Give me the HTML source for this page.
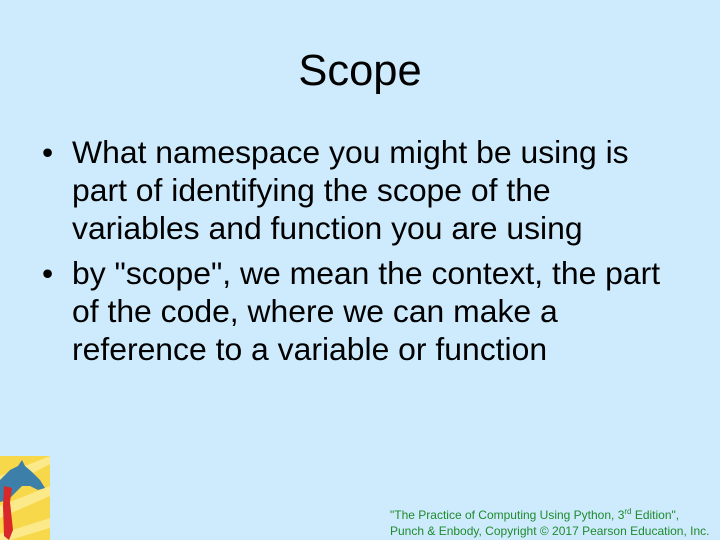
<!DOCTYPE html>
<html><head><style>
body{margin:0;width:720px;height:540px;background:#cdebfd;font-family:"Liberation Sans",sans-serif;position:relative;overflow:hidden}
h1{position:absolute;top:47px;left:0;width:720px;text-align:center;margin:0;font-weight:normal;font-size:43.5px;color:#000}
ul{position:absolute;top:133px;left:42px;margin:0;padding:0;list-style:none;width:675px}
li{position:relative;padding-left:30px;font-size:31.9px;line-height:38px;margin-bottom:7px;color:#000;white-space:nowrap}
li:before{content:"•";position:absolute;left:0;top:0}
.f{position:absolute;left:390px;top:507px;font-size:12px;line-height:16px;color:#1f8a2e}
sup{font-size:8px;vertical-align:5px;line-height:0}
</style></head><body>
<h1>Scope</h1>
<ul>
<li>What namespace you might be using is<br>part of identifying the scope of the<br>variables and function you are using</li>
<li>by "scope", we mean the context, the part<br>of the code, where we can make a<br>reference to a variable or function</li>
</ul>
<svg style="position:absolute;left:0;top:456px" width="50" height="84" viewBox="0 0 50 84">
<rect width="50" height="84" fill="#f7d84a"/>
<path d="M0 20L50 0V8L0 34ZM0 50L50 30V40L0 62ZM0 78L50 62V72L10 84H0Z" fill="#fbe98a"/>
<path d="M0 24L10 14L18 10L22 4L25 10L32 16L40 24L45 32L38 34L30 30L22 30L14 38L8 44L0 46Z" fill="#3c7fa8"/>
<path d="M4 30L12 32L10 46L13 74L9 84L4 80L3 50Z" fill="#d8282a"/>
</svg>
<div class="f">"The Practice of Computing Using Python, 3<sup>rd</sup> Edition",<br>Punch &amp; Enbody, Copyright © 2017 Pearson Education, Inc.</div>
</body></html>
